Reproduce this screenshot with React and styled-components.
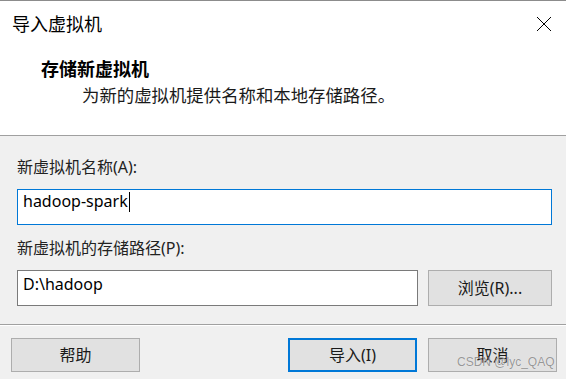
import styled, { createGlobalStyle } from "styled-components";

const GlobalStyle = createGlobalStyle`
  html, body {
    margin: 0;
    padding: 0;
    background: #f0f0f0;
  }
  body {
    font-family: "Noto Sans", "Noto Sans CJK SC", sans-serif;
  }
`;

const Window = styled.div`
  position: relative;
  width: 566px;
  height: 379px;
  overflow: hidden;
  background: #f0f0f0;
  display: flex;
  flex-direction: column;
`;

const Header = styled.div`
  box-sizing: border-box;
  height: 136px;
  background: #fff;
  border-top: 1px solid #8c8c8c;
  border-bottom: 1px solid #a0a0a0;
`;

const TitleBar = styled.div`
  display: flex;
  align-items: flex-start;
  justify-content: space-between;
  padding: 10px 14px 0 12px;
`;

const Title = styled.div`
  font-family: "Noto Sans CJK SC", sans-serif;
  font-size: 18px;
  line-height: 24px;
  color: #000;
`;

const CloseButton = styled.div`
  width: 16px;
  height: 16px;
  margin-top: 5px;
  svg {
    display: block;
  }
`;

const Heading = styled.div`
  font-family: "Noto Sans CJK SC", sans-serif;
  font-weight: 700;
  font-size: 18px;
  line-height: 24px;
  color: #000;
  margin: 21px 0 0 41px;
`;

const Subtitle = styled.div`
  font-family: "Noto Sans CJK SC", sans-serif;
  font-size: 17.4px;
  line-height: 24px;
  color: #1a1a1a;
  margin: 3px 0 0 82px;
`;

const Body = styled.div`
  padding: 21px 14px 0 17px;
`;

const Label = styled.div`
  font-family: "Noto Sans", "Noto Sans CJK SC", sans-serif;
  font-size: 16px;
  line-height: 20px;
  color: #222;
  margin-top: ${(p) => p.$gap || 0}px;
`;

const Field = styled.div`
  box-sizing: border-box;
  height: 36px;
  width: ${(p) => (p.$width ? p.$width + "px" : "100%")};
  margin-top: 12px;
  background: #fff;
  border: 1px solid ${(p) => (p.$focused ? "#0078d7" : "#7a7a7a")};
  display: flex;
  align-items: flex-start;
  padding: ${(p) => (p.$focused ? 1 : 3)}px 4px 0 5px;
  font-family: "Noto Sans", sans-serif;
  font-size: 16px;
  line-height: 20px;
  color: #000;
`;

const Caret = styled.span`
  display: inline-block;
  width: 1px;
  height: 20px;
  margin-left: 1px;
  margin-top: 1px;
  background: #000;
`;

const PathRow = styled.div`
  display: flex;
  align-items: flex-start;
  gap: 10px;
`;

const Button = styled.div`
  box-sizing: border-box;
  width: ${(p) => p.$width || 129}px;
  height: ${(p) => p.$height || 34}px;
  margin-top: ${(p) => p.$top || 0}px;
  background: #e1e1e1;
  border: ${(p) => (p.$default ? "2px solid #0078d7" : "1px solid #adadad")};
  display: flex;
  align-items: center;
  justify-content: center;
  font-family: "Noto Sans", "Noto Sans CJK SC", sans-serif;
  font-size: 16px;
  line-height: 20px;
  color: #1a1a1a;
`;

const Separator = styled.div`
  margin-top: 18px;
  border-top: 1px solid #a0a0a0;
  border-bottom: 1px solid #fff;
`;

const Footer = styled.div`
  display: flex;
  align-items: center;
  padding: 12px 9px 0 11px;
`;

const Spacer = styled.div`
  flex: 1;
`;

const ButtonGroup = styled.div`
  display: flex;
  gap: 11px;
`;

const Watermark = styled.div`
  position: absolute;
  left: 457px;
  top: 356px;
  font-family: "Liberation Sans", Arial, sans-serif;
  font-size: 12px;
  line-height: 12px;
  color: rgba(120, 120, 120, 0.75);
  text-shadow: 0 0 1px rgba(255, 255, 255, 0.8);
  white-space: nowrap;
`;

export default function App() {
  return (
    <>
      <GlobalStyle />
      <Window>
        <Header>
          <TitleBar>
            <Title>导入虚拟机</Title>
            <CloseButton>
              <svg width="16" height="16" viewBox="0 0 16 16">
                <path d="M1 1 L15 15 M15 1 L1 15" stroke="#000" strokeWidth="1" fill="none" />
              </svg>
            </CloseButton>
          </TitleBar>
          <Heading>存储新虚拟机</Heading>
          <Subtitle>为新的虚拟机提供名称和本地存储路径。</Subtitle>
        </Header>

        <Body>
          <Label>新虚拟机名称(A):</Label>
          <Field $focused>
            hadoop-spark
            <Caret />
          </Field>
          <Label $gap={13}>新虚拟机的存储路径(P):</Label>
          <PathRow>
            <Field $width={401}>D:\hadoop</Field>
            <Button $width={124} $height={36} $top={12}>
              浏览(R)...
            </Button>
          </PathRow>
        </Body>

        <Separator />

        <Footer>
          <Button>帮助</Button>
          <Spacer />
          <ButtonGroup>
            <Button $default>导入(I)</Button>
            <Button>取消</Button>
          </ButtonGroup>
        </Footer>

        <Watermark>CSDN @lyc_QAQ</Watermark>
      </Window>
    </>
  );
}
